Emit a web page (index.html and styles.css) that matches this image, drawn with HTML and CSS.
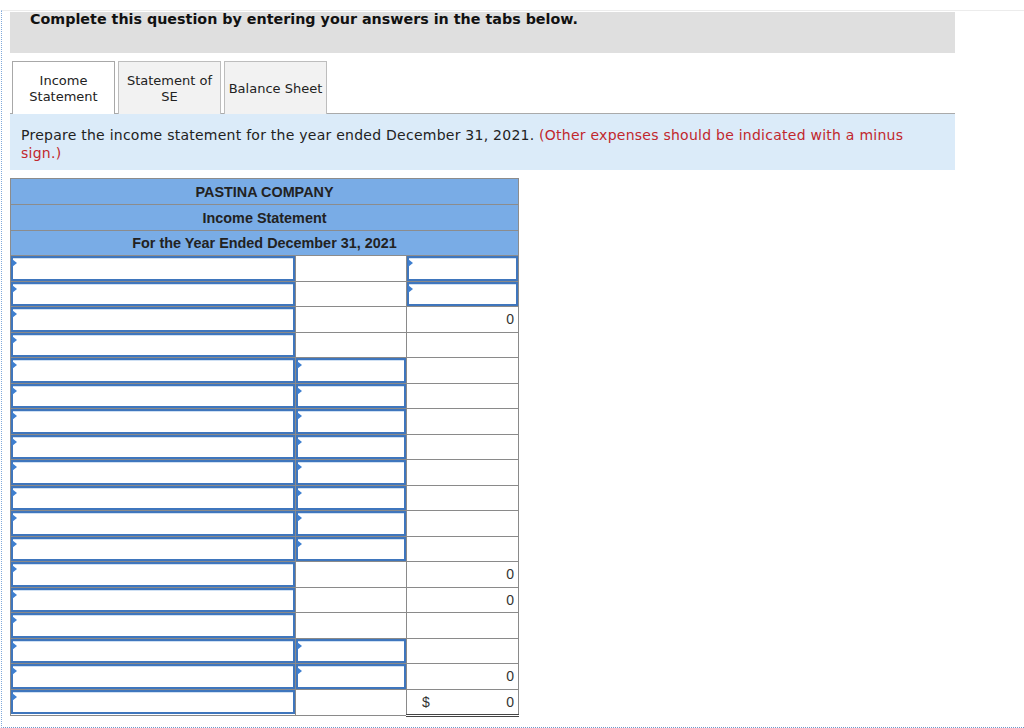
FILE: index.html
```html
<!DOCTYPE html>
<html>
<head>
<meta charset="utf-8">
<link rel="stylesheet" href="styles.css">
</head>
<body>
<div class="frame">
  <div class="qhead">Complete this question by entering your answers in the tabs below.</div>
  <div class="tabs">
    <div class="tab active">Income<br>Statement</div>
    <div class="tab">Statement of<br>SE</div>
    <div class="tab">Balance Sheet</div>
  </div>
  <div class="instr">Prepare the income statement for the year ended December 31, 2021. <span class="red">(Other expenses should be indicated with a minus sign.)</span></div>
  <table class="stmt">
    <colgroup><col class="c1"><col class="c2"><col class="c3"></colgroup>
    <tr class="hd"><th colspan="3">PASTINA COMPANY</th></tr>
    <tr class="hd"><th colspan="3">Income Statement</th></tr>
    <tr class="hd last"><th colspan="3">For the Year Ended December 31, 2021</th></tr>

    <tr><td><div class="inp"></div></td><td></td><td><div class="inp"></div></td></tr>
    <tr><td><div class="inp"></div></td><td></td><td><div class="inp"></div></td></tr>
    <tr><td><div class="inp"></div></td><td></td><td class="num topline">0</td></tr>
    <tr><td><div class="inp"></div></td><td></td><td></td></tr>

    <tr><td><div class="inp"></div></td><td><div class="inp"></div></td><td></td></tr>
    <tr><td><div class="inp"></div></td><td><div class="inp"></div></td><td></td></tr>
    <tr><td><div class="inp"></div></td><td><div class="inp"></div></td><td></td></tr>
    <tr><td><div class="inp"></div></td><td><div class="inp"></div></td><td></td></tr>
    <tr><td><div class="inp"></div></td><td><div class="inp"></div></td><td></td></tr>
    <tr><td><div class="inp"></div></td><td><div class="inp"></div></td><td></td></tr>
    <tr><td><div class="inp"></div></td><td><div class="inp"></div></td><td></td></tr>
    <tr><td><div class="inp"></div></td><td><div class="inp"></div></td><td></td></tr>

    <tr><td><div class="inp"></div></td><td></td><td class="num">0</td></tr>
    <tr><td><div class="inp"></div></td><td></td><td class="num topline">0</td></tr>
    <tr><td><div class="inp"></div></td><td></td><td></td></tr>
    <tr><td><div class="inp"></div></td><td><div class="inp"></div></td><td></td></tr>
    <tr><td><div class="inp"></div></td><td><div class="inp"></div></td><td class="num">0</td></tr>
    <tr><td><div class="inp"></div></td><td></td><td class="num topline total"><span class="dollar">$</span><span>0</span></td></tr>
  </table>
</div>
</body>
</html>
```

FILE: styles.css
```css
html, body {
  margin: 0;
  padding: 0;
  background: #ffffff;
}

.frame {
  box-sizing: border-box;
  height: 718px;
  margin: 10px 0 0 1px;
  padding-left: 8px;
  border-top: 1px solid #ececec;
  border-left: 1px dotted #7fa9dc;
  border-bottom: 1px dotted #6f97cc;
  font-family: "DejaVu Sans", Verdana, sans-serif;
}

.qhead {
  box-sizing: border-box;
  width: 945px;
  height: 41px;
  margin-top: 1px;
  padding: 0 0 0 20px;
  background: #dfdfdf;
  font-weight: bold;
  font-size: 14.3px;
  line-height: 14px;
  color: #111;
}

.tabs {
  display: flex;
  gap: 3px;
  width: 943px;
  margin-top: 8px;
  padding-left: 2px;
  border-bottom: 1px solid #aaaaaa;
  height: 52px;
}

.tab {
  box-sizing: border-box;
  width: 103px;
  height: 53px;
  border: 1px solid #bdbdbd;
  border-bottom: none;
  background: #f2f2f2;
  display: flex;
  align-items: center;
  justify-content: center;
  text-align: center;
  font-size: 13px;
  line-height: 16px;
  color: #222;
  padding-top: 1px;
}

.tab.active {
  background: #ffffff;
  border-color: #a8a8a8;
  position: relative;
  z-index: 1;
}

.instr {
  box-sizing: border-box;
  width: 945px;
  height: 56px;
  padding: 12px 11px 0 11px;
  background: #dbebf9;
  font-size: 14px;
  letter-spacing: 0.25px;
  line-height: 18px;
  color: #222;
}

.red {
  color: #c1272d;
}

.stmt {
  margin-top: 8px;
  border-collapse: collapse;
  width: 508px;
  table-layout: fixed;
  font-family: "Liberation Sans", Arial, sans-serif;
  font-size: 14px;
  color: #333;
}

.c1 { width: 285px; }
.c2 { width: 111px; }
.c3 { width: 112px; }

.stmt th {
  height: 25px;
  padding: 0;
  background: #79ace6;
  border: 1px solid #8c8c8c;
  font-weight: bold;
  font-size: 14.4px;
  color: #222;
  text-align: center;
}

.stmt tr.last th {
  height: 24px;
}

.stmt td {
  height: 24.5px;
  padding: 0;
  border: 1px solid #8a8a8a;
  background: #ffffff;
  vertical-align: top;
}

.inp {
  position: relative;
  box-sizing: border-box;
  height: 24.5px;
  border: 2px solid #3f76bd;
  box-shadow: inset 0 1px 0 #cfe0f3;
  background: #ffffff;
}

.inp::before {
  content: "";
  position: absolute;
  left: -1px;
  top: 1px;
  border-top: 4px solid transparent;
  border-bottom: 4px solid transparent;
  border-left: 5px solid #3f7fcf;
}

.stmt td.num {
  text-align: right;
  vertical-align: middle;
  padding-right: 4px;
  color: #333;
}

.stmt td.topline {
  border-top: 1px solid #000000;
}

.stmt td.total {
  border-bottom: 3px double #444;
}

.dollar {
  float: left;
  padding-left: 15px;
}
```
